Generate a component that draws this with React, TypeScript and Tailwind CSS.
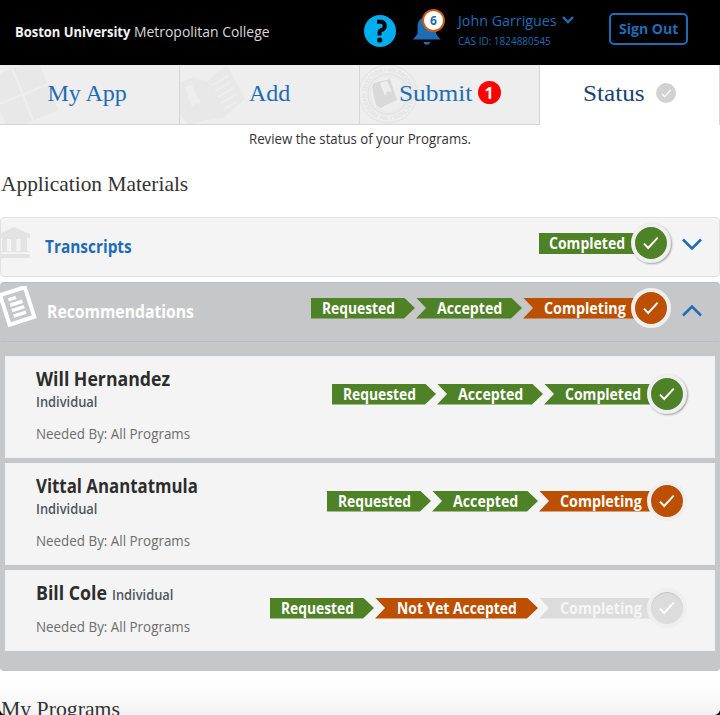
import React from "react";

const SANS = "font-['Open_Sans','Noto_Sans',sans-serif]";
const SERIF = "font-['Liberation_Serif',serif]";

type Tone = "green" | "orange" | "gray";
type Step = { label: string; tone: Tone; width: number; textX: number; textW: number };

const FILL: Record<Tone, string> = { green: "bg-[#4f8127]", orange: "bg-[#bd4f00]", gray: "bg-[#dcdcdc]" };

/* Text stretched horizontally to a known run length. */
function Fit({ w, className = "", children }: { w: number; className?: string; children: string }) {
  const ref = React.useRef<HTMLSpanElement>(null);
  const [scale, setScale] = React.useState(1);
  React.useLayoutEffect(() => {
    const measure = () => {
      if (ref.current) setScale(w / ref.current.offsetWidth);
    };
    measure();
    document.fonts?.ready.then(measure);
  }, [w]);
  return (
    <span className="inline-block whitespace-nowrap" style={{ width: w }}>
      <span ref={ref} className={`inline-block origin-left ${className}`} style={{ transform: `scaleX(${scale})` }}>
        {children}
      </span>
    </span>
  );
}

function Check({ className = "" }: { className?: string }) {
  return (
    <svg viewBox="0 0 16 14" className={className} fill="none" stroke="#fff" strokeWidth="1.9">
      <path d="M1 7.6 5.2 12 14.7 1.6" />
    </svg>
  );
}

function Pipeline({ steps, shadow = false }: { steps: Step[]; shadow?: boolean }) {
  const last = steps[steps.length - 1];
  return (
    <div className={`flex h-10 items-center ${SANS}`}>
      {steps.map((s, i) => {
        const isLast = i === steps.length - 1;
        const clip =
          i === 0
            ? isLast
              ? ""
              : "[clip-path:polygon(0_0,calc(100%-11px)_0,100%_50%,calc(100%-11px)_100%,0_100%)]"
            : isLast
              ? "[clip-path:polygon(0_0,100%_0,100%_100%,0_100%,10px_50%)]"
              : "[clip-path:polygon(0_0,calc(100%-11px)_0,100%_50%,calc(100%-11px)_100%,0_100%,10px_50%)]";
        return (
          <div
            key={s.label}
            className={`h-[21px] shrink-0 text-[15.5px] leading-[21px] font-bold text-white ${isLast ? "" : "mr-px"} ${FILL[s.tone]} ${clip}`}
            style={{ width: s.width, paddingLeft: s.textX }}
          >
            <Fit w={s.textW} className={s.tone === "gray" ? "text-[#f6f6f6]" : ""}>{s.label}</Fit>
          </div>
        );
      })}
      <div
        className={`z-10 -ml-[5px] flex size-10 shrink-0 items-center justify-center rounded-full border-4 border-[#efefef] ${FILL[last.tone]} ${shadow ? "shadow-[1px_1px_2px_rgba(0,0,0,0.35)]" : ""} ${last.tone === "gray" ? "[box-shadow:inset_0_1px_1px_rgba(0,0,0,0.12)]" : ""}`}
      >
        <Check className="h-[14px] w-4" />
      </div>
    </div>
  );
}

function Tab({ label, w, pad, art, children }: { label: string; w: number; pad: string; art?: React.ReactNode; children?: React.ReactNode }) {
  return (
    <div className={`relative flex h-[60px] w-[180px] items-center overflow-hidden border-r border-b border-[#d5d5d5] bg-[#eeeeee] pb-1 ${pad}`}>
      {art}
      <span className={`relative text-[24px] leading-[30px] text-[#1f6cb6] ${SERIF}`}>
        <Fit w={w}>{label}</Fit>
      </span>
      {children}
    </div>
  );
}

function Person({ name, w, inline = false, steps, shadow }: { name: string; w: number; inline?: boolean; steps: Step[]; shadow?: boolean }) {
  return (
    <div className={`flex justify-between border border-[#f0f0f0] bg-[#f4f4f4] pr-[27px] pl-[29.5px] ${inline ? "h-[81px]" : "h-[102px]"}`}>
      <div className="pt-[9px]">
        <div className={inline ? "flex h-[26px] items-baseline gap-[5px]" : "flex h-[47px] flex-col"}>
          <div className="h-[26px] text-[19px] leading-[26px] font-bold text-[#2d2d2d]"><Fit w={w}>{name}</Fit></div>
          <div className="h-5 text-[13.5px] leading-5 font-semibold text-[#4d565e]"><Fit w={61}>Individual</Fit></div>
        </div>
        <div className="mt-[11px] text-[14px] leading-5 text-[#6d6d6d]"><Fit w={154}>Needed By: All Programs</Fit></div>
      </div>
      <div className="pt-[17px]"><Pipeline steps={steps} shadow={shadow} /></div>
    </div>
  );
}

const requested: Step = { label: "Requested", tone: "green", width: 104, textX: 10.5, textW: 73 };
const accepted: Step = { label: "Accepted", tone: "green", width: 106, textX: 21, textW: 65 };
const completing: Step = { label: "Completing", tone: "orange", width: 113, textX: 20.5, textW: 82 };

export default function App() {
  return (
    <div className={`relative h-[715px] w-[720px] overflow-hidden bg-white ${SANS}`}>
      <header className="flex h-[65px] bg-black">
        <div className="w-[364px] pt-[20.5px] pl-[15px] text-[15px] leading-5 text-[#d9d9d9]">
          <Fit w={115} className="font-bold text-[#f4f4f4]">Boston University</Fit>
          <span className="inline-block w-1" />
          <Fit w={135.5}>Metropolitan College</Fit>
        </div>
        <svg className="mt-[15px] size-8" viewBox="0 0 32 32">
          <circle cx="16" cy="16" r="16" fill="#00adef" />
          <path d="M13 6.8h3.500c5.500 0 5.500 7.500 1 8.300-2 .3-2 1.500-2 5.400" fill="none" stroke="#000" strokeWidth="4" />
          <circle cx="15.7" cy="25" r="2.600" fill="#000" />
        </svg>
        <div className="relative ml-[17px] h-[65px] w-[34px]">
          <svg className="mt-[15px] h-[30px] w-[28px]" viewBox="0 0 28 30" fill="#1f6cb6">
            <path d="M0 24.500 4.500 19V12C4.500 6 8 2 13.500 2S23 6 23 12v7l4.500 5.500zM10.500 27h6.500a3.200 2.600 0 0 1-6.500 0z" />
          </svg>
          <div className="absolute top-[9px] left-[9px] flex size-[23px] items-center justify-center rounded-full border-2 border-[#c75b12] bg-white text-[12px] font-bold text-[#1f6cb6]">6</div>
        </div>
        <div className="ml-[11px] w-[151px] pt-[10px] text-[#1f6cb6]">
          <div className="flex h-5 items-center text-[15px] leading-5">
            <Fit w={99}>John Garrigues</Fit>
            <svg className="ml-[5px] h-2 w-3" viewBox="0 0 12 8" fill="none" stroke="#1f6cb6" strokeWidth="2.300"><path d="m1 1 5 5 5-5" /></svg>
          </div>
          <div className="mt-[3px] text-[10.5px] leading-4"><Fit w={93}>CAS ID: 1824880545</Fit></div>
        </div>
        <button className="mt-[13px] h-8 w-[79px] rounded-[5px] border-2 border-[#1f6cb6] text-center text-[15px] leading-[26px] font-bold text-[#1f6cb6]"><span className="relative -top-px"><Fit w={59}>Sign Out</Fit></span></button>
      </header>

      <nav className="flex">
        <Tab label="My App" w={79} pad="pl-[47.5px]" art={
          <svg className="absolute top-0 left-0 h-[60px] w-[62px]" viewBox="0 0 62 60" fill="#e8e8e8"><g transform="rotate(-22 24 30)"><path d="M-4 1h26v27H-4zM24 1h26v27H24zM-4 30h26v27H-4zM24 30h26v27H24z" /></g></svg>
        } />
        <Tab label="Add" w={41} pad="pl-[69px]" art={
          <svg className="absolute top-0 left-0 h-[60px] w-[66px]" viewBox="0 0 66 60" fill="#e8e8e8"><path d="m0 17 14-4 13 3L47 0l18 34-22 19-17 2-17 5L0 49z" /><path d="m5 22 7-2 9 19-5-1-4 4z" fill="#eeeeee" /><path d="m32 20 16-9M35 26l16-9M38 32l16-9M41 38l16-9M44 44l12-7" stroke="#eeeeee" strokeWidth="1.500" /></svg>
        } />
        <Tab label="Submit" w={73} pad="pl-[38.5px]" art={
          <svg className="absolute top-0 left-0 size-[60px]" viewBox="0 0 60 60">
            <g fill="none" stroke="#e2e2e2"><circle cx="28" cy="29" r="29" /><circle cx="28" cy="29" r="20" strokeWidth="1.400" /><circle cx="28" cy="29" r="18" strokeWidth=".6" /></g>
            <defs><path id="sealRing" d="M28 51a22 22 0 1 1 .1 0" /></defs>
            <text fill="#dcdcdc" fontSize="5.500" fontFamily="Open Sans"><textPath href="#sealRing" textLength="136">MY PROGRAM SELECTION • MY PROGRAM SELECTION •</textPath></text>
            <path d="m14 18 16-4 7 21-17 8-4-3-4-18zM20 18l5 13 2-5 5 1-5-11z" fill="#d9d9d9" fillRule="evenodd" />
          </svg>
        }>
          <span className="ml-[6px] flex size-[23px] items-center justify-center rounded-full bg-[#ff0000] text-[16px] font-bold text-white">1</span>
        </Tab>
        <div className="flex h-[60px] w-[180px] items-center border-r border-[#d5d5d5] bg-white pb-1 pl-[43px]">
          <span className={`text-[24px] leading-[30px] text-[#174472] ${SERIF}`}><Fit w={62}>Status</Fit></span>
          <span className="ml-[11px] flex size-5 items-center justify-center rounded-full bg-[#d2d2d2]"><Check className="h-[9px] w-[11px]" /></span>
        </div>
      </nav>

      <p className="mt-1 pl-[249px] text-[14px] leading-5 text-[#333333]"><Fit w={222}>Review the status of your Programs.</Fit></p>
      <h2 className={`mt-[22px] pl-px text-[21px] leading-[26px] text-[#333333] ${SERIF}`}><Fit w={187.5}>Application Materials</Fit></h2>

      <section className="mt-5 flex h-[60px] rounded-[4px] border border-[#e2e2e2] bg-[#f4f4f4]">
        <svg className="mt-[9px] h-8 w-[30px]" viewBox="0 0 30 32" fill="#e3e3e3"><path d="M-3 7 13 0l16 7v4h-3v13h3v1H0v-1h1V11H-3zM6 12v12h4V12zM15.500 12v12h4V12zM0 27h27q2 0 2 2t-2 2H0z" fillRule="evenodd" /></svg>
        <h3 className="mt-[17px] ml-[14px] w-[494px] text-[17px] leading-6 font-bold text-[#1f6cb6]"><Fit w={87}>Transcripts</Fit></h3>
        <div className="mt-[5px]"><Pipeline shadow steps={[{ label: "Completed", tone: "green", width: 97, textX: 10, textW: 76 }]} /></div>
        <svg className="mt-[20px] ml-[11px] h-[13px] w-5" viewBox="0 0 20 13" fill="none" stroke="#1f6cb6" strokeWidth="2.500"><path d="m1 1.500 9 9 9-9" /></svg>
      </section>

      <section className="mt-[5px] h-[389px] rounded-[4px] border border-t-[#b1bfd0] border-[#c6c7c9] bg-[#c6c7c9]">
        <div className="flex h-[59px] border-b border-[#b1bfd0]">
          <svg className="mt-[3px] -ml-1 h-[42px] w-10" viewBox="0 0 40 42"><g transform="rotate(-18 20 21)"><path d="M7.500 4.500h26v31h-26z" fill="none" stroke="#fff" strokeWidth="4" /><path d="M14 11.500h8M14 17.200h13M14 22.900h13M14 28.600h13" stroke="#fff" strokeWidth="3.500" /></g></svg>
          <h3 className="mt-[17px] ml-[9.5px] w-[264.5px] text-[17px] leading-6 font-bold text-white"><Fit w={147}>Recommendations</Fit></h3>
          <div className="mt-[5px]"><Pipeline steps={[requested, accepted, completing]} /></div>
          <svg className="mt-[21px] ml-[11px] h-[13px] w-5" viewBox="0 0 20 13" fill="none" stroke="#1f6cb6" strokeWidth="2.500"><path d="m1 11.500 9-9 9 9" /></svg>
        </div>
        <div className="mt-[14px] flex flex-col gap-[5px] px-1">
          <Person name="Will Hernandez" w={134} shadow steps={[requested, accepted, { label: "Completed", tone: "green", width: 108, textX: 21, textW: 76 }]} />
          <Person name="Vittal Anantatmula" w={162} steps={[requested, accepted, completing]} />
          <Person name="Bill Cole" w={71} inline steps={[requested, { label: "Not Yet Accepted", tone: "orange", width: 163, textX: 22, textW: 120 }, { ...completing, tone: "gray" }]} />
        </div>
      </section>

      <div className="h-11 bg-linear-to-b from-white from-30% to-[#f2f2f2] pt-[25px] pl-px">
        <h2 className={`text-[21px] leading-[26px] text-[#333333] ${SERIF}`}><Fit w={119}>My Programs</Fit></h2>
      </div>
      <svg className="absolute right-0 bottom-0 size-[5px]" viewBox="0 0 5 5"><path d="M5 0v5H0Q4 4 5 0" fill="#111" /></svg>
      <svg className="absolute bottom-0 left-0 size-[5px]" viewBox="0 0 5 5"><path d="M0 0v5h5Q1 4 0 0" fill="#111" /></svg>
    </div>
  );
}
